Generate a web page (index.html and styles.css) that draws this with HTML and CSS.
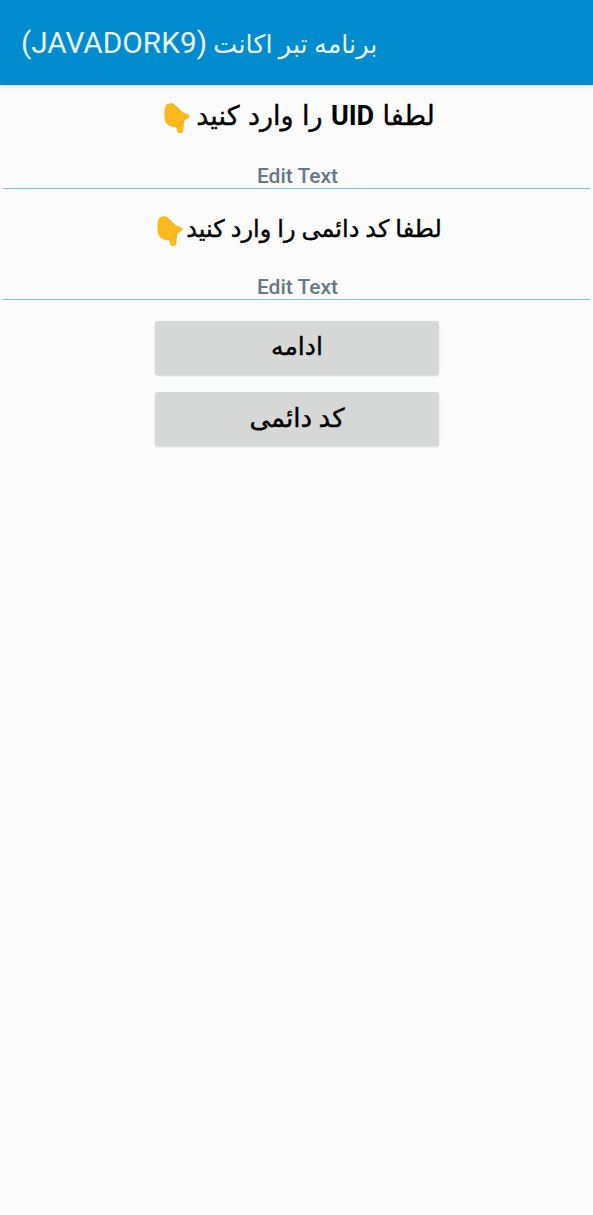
FILE: index.html
```html
<!DOCTYPE html>
<html lang="fa">
<head>
    <meta charset="UTF-8">
    <meta name="viewport" content="width=device-width, initial-scale=1.0">
    <title>JAVADORK9</title>
    <link rel="stylesheet" href="styles.css">
</head>
<body>
    <header class="appbar">
        <h1 class="appbar__title" dir="rtl">برنامه تبر اکانت <bdi class="appbar__name" dir="ltr">(JAVADORK9)</bdi></h1>
    </header>

    <main class="main">
        <div class="prompt prompt--first" dir="rtl">
            <span class="prompt__text">لطفا <b class="prompt__latin">UID</b> را وارد کنید</span>
            <svg class="hand"><use href="#hand"/></svg>
        </div>
        <div class="field field--first">Edit Text</div>

        <div class="prompt prompt--second" dir="rtl">
            <span class="prompt__text">لطفا کد دائمی را وارد کنید</span>
            <svg class="hand"><use href="#hand"/></svg>
        </div>
        <div class="field">Edit Text</div>

        <div class="actions">
            <button class="btn" type="button">ادامه</button>
            <button class="btn btn--wide" type="button">کد دائمی</button>
        </div>
    </main>

    <!-- pointing hand emoji, used by both prompts -->
    <svg class="defs" width="0" height="0">
        <symbol id="hand" viewBox="0 0 26 32">
            <path d="M8 0 L3 1 C1 2 0 6 0 12 C0 17 1 21 4 23 C7 25 10 25 12 25 L13 29 C13.500 32 19 32 19.500 29 L20.500 18 L25 15.500 C26.500 14 26.500 12 24 11.500 L18 9 C15 6 11 2 8 0 Z" fill="#fbbb1e"/>
            <path d="M9 1 C12 4 15 7 18 9 M12 25 C14 23 18 20 20.500 18" fill="none" stroke="#e39a18" stroke-width="0.8"/>
        </symbol>
    </svg>
</body>
</html>
```

FILE: styles.css
```css
* {
    box-sizing: border-box;
}

body {
    margin: 0;
    min-height: 100vh;
    background-color: #fbfbfb;
    font-family: Roboto, "DejaVu Sans", sans-serif;
}

.appbar {
    height: 85px;
    display: flex;
    align-items: center;
    padding: 0 21px;
    background-color: #038bcf;
    box-shadow: 0 1px 4px rgba(0, 0, 0, 0.18);
}

.appbar__title {
    margin: 0;
    color: #e6f5fb;
    font-size: 25.5px;
    font-weight: 400;
    white-space: nowrap;
}

.appbar__name {
    font-size: 29.8px;
}

.main {
    padding: 0 3px;
}

.prompt {
    display: flex;
    justify-content: center;
    align-items: center;
    gap: 3px;
    height: 36px;
    padding-left: 6px;
    color: #000;
    font-size: 24px;
    font-weight: 500;
    -webkit-text-stroke: 0.4px #000;
}

.prompt--first {
    gap: 6px;
    margin-top: 13px;
    font-size: 27px;
    word-spacing: 1.7px;
}

.prompt--second {
    margin-top: 22px;
}

.prompt__latin {
    font-weight: 700;
    -webkit-text-stroke: 0;
}

.hand {
    width: 26px;
    height: 31px;
    margin-top: 4px;
    flex: none;
}

.field {
    height: 25px;
    margin-top: 28px;
    border-bottom: 1px solid #78c3e3;
    color: #667985;
    font-size: 21px;
    font-weight: 500;
    line-height: 24px;
    text-align: center;
    text-indent: 2px;
}

.field--first {
    margin-top: 30px;
}

.actions {
    display: flex;
    flex-direction: column;
    align-items: center;
    gap: 17px;
    margin-top: 21px;
    padding-left: 1px;
}

.btn {
    width: 284px;
    height: 54px;
    padding: 0 0 3px;
    border: 0;
    border-radius: 3px;
    background-color: #d6d8d8;
    box-shadow: 0 1px 2px rgba(0, 0, 0, 0.15);
    color: #000;
    font-family: inherit;
    font-size: 25px;
    font-weight: 500;
    -webkit-text-stroke: 0.4px #000;
}

.btn--wide {
    font-size: 26px;
}

.defs {
    position: absolute;
}
```
